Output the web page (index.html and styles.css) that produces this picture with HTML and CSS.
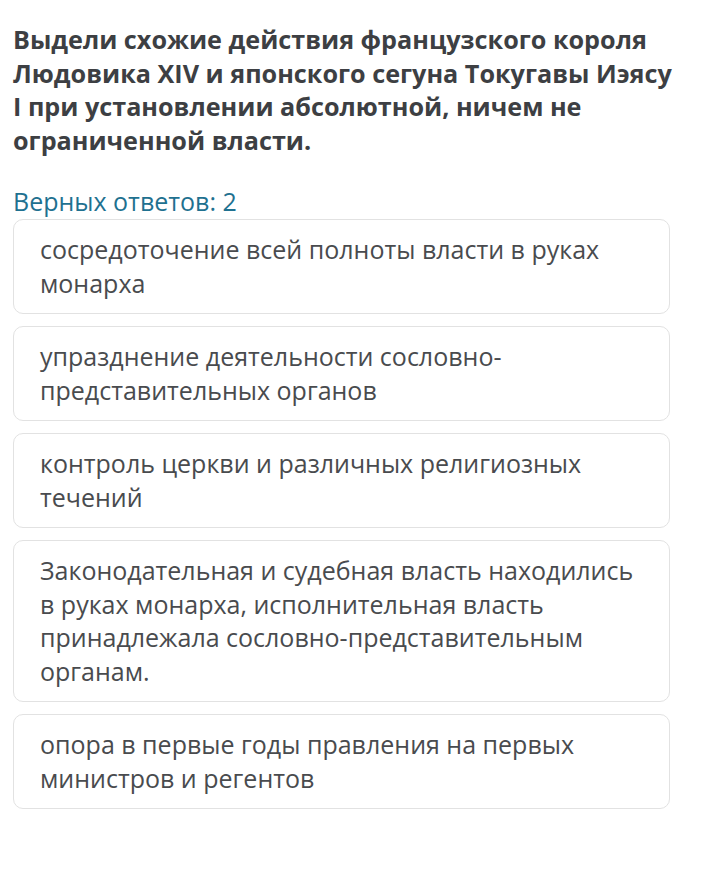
FILE: index.html
```html
<!DOCTYPE html>
<html lang="ru">
<head>
  <meta charset="UTF-8" />
  <meta name="viewport" content="width=device-width, initial-scale=1.0"/>
  <title>Верных ответов</title>
  <link rel="stylesheet" href="styles.css">
</head>
<body>
  <div class="question">
    <h1>Выдели схожие действия французского короля Людовика XIV и японского сегуна Токугавы Иэясу I при установлении абсолютной, ничем не ограниченной власти.</h1>

    <div class="answers-count">Верных ответов: 2</div>

    <div class="options">
      <div class="option">сосредоточение всей полноты власти в руках монарха</div>
      <div class="option">упразднение деятельности сословно-представительных органов</div>
      <div class="option">контроль церкви и различных религиозных течений</div>
      <div class="option">Законодательная и судебная власть находились в руках монарха, исполнительная власть принадлежала сословно-представительным органам.</div>
      <div class="option">опора в первые годы правления на первых министров и регентов</div>
    </div>
  </div>
</body>
</html>
```

FILE: styles.css
```css
body {
  font-family: 'Open Sans', 'Noto Sans', sans-serif;
  background-color: #fff;
  margin: 0;
  padding: 0;
}

.question {
  width: 657px;
  padding: 23px 0 0 13px;
}

h1 {
  margin: 0;
  font-size: 25.2px;
  font-weight: 700;
  line-height: 33.5px;
  color: #3d3f43;
  width: 665px;
}

.answers-count {
  margin-top: 29px;
  font-size: 25px;
  line-height: 30px;
  color: #1f7190;
}

.options {
  display: flex;
  flex-direction: column;
  gap: 12px;
  margin-top: 3px;
}

.option {
  border: 1px solid #e2e2e2;
  border-radius: 10px;
  padding: 13px 26px;
  font-size: 25px;
  line-height: 33.5px;
  color: #494b4e;
}
```
